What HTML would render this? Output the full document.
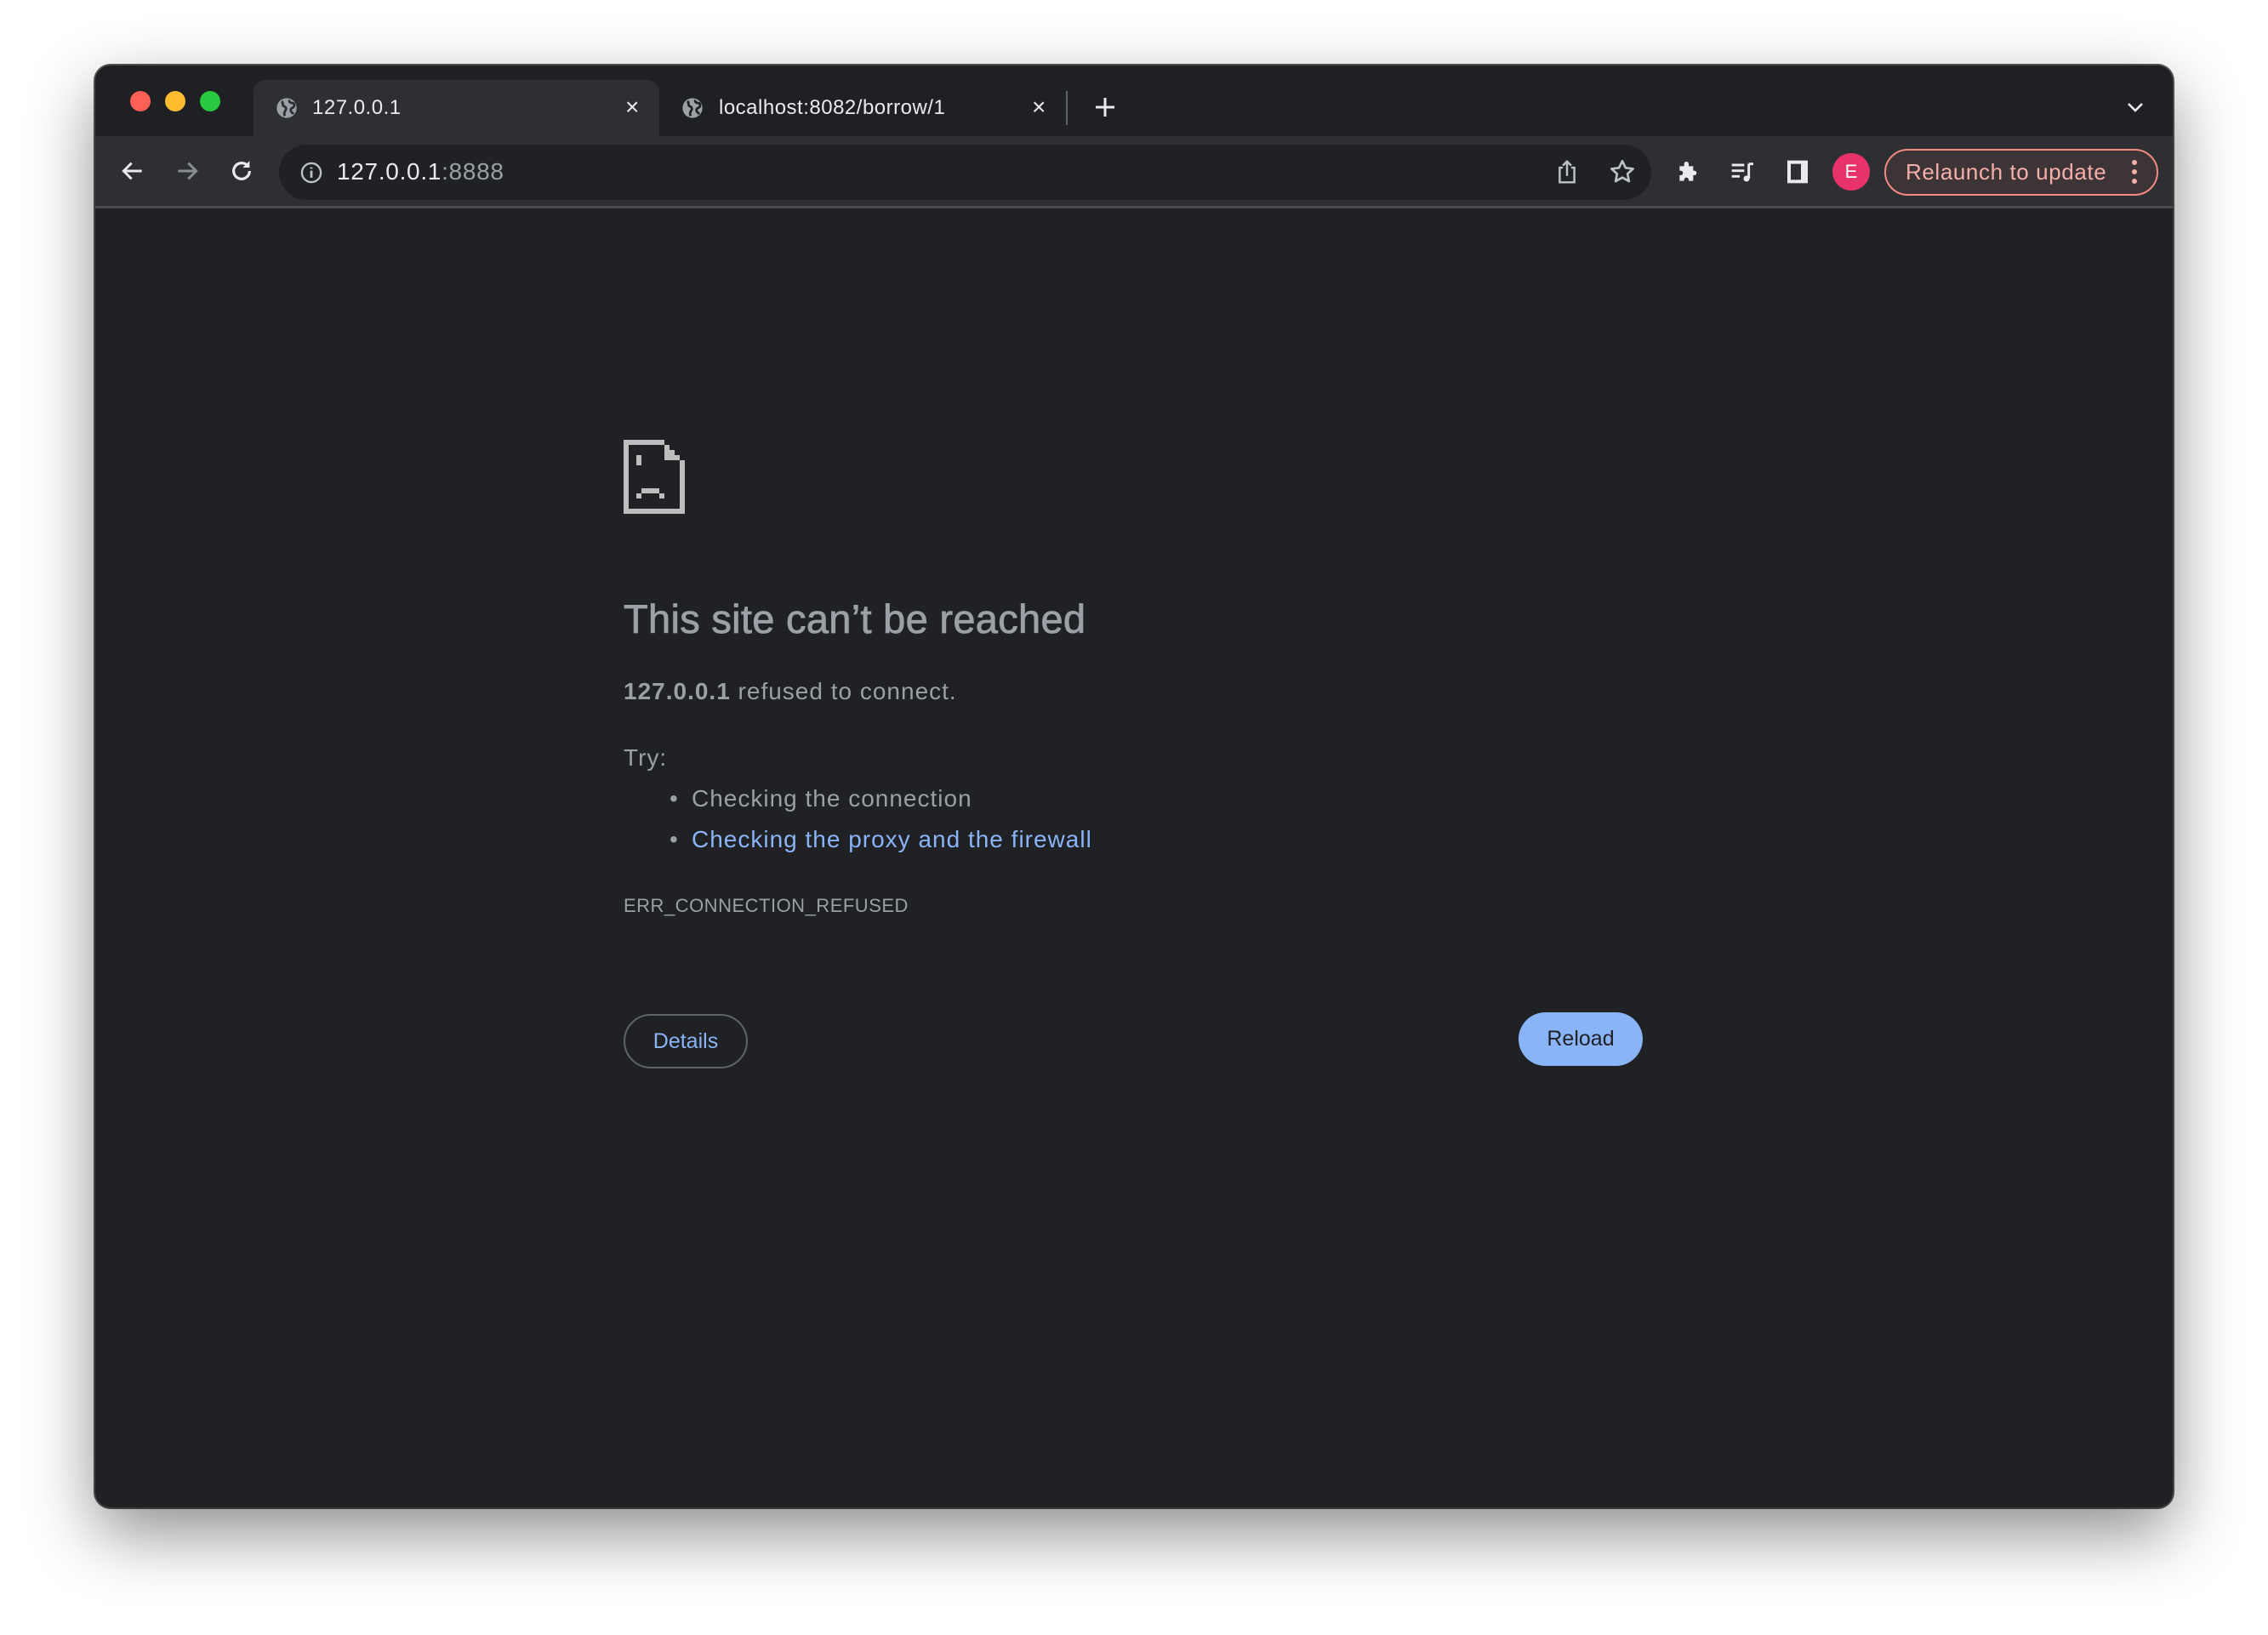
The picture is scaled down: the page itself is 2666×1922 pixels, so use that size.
<!DOCTYPE html>
<html><head><meta charset="utf-8"><style>
*{margin:0;padding:0;box-sizing:border-box}
body{width:2666px;height:1922px;background:#fff;position:relative;overflow:hidden;font-family:"Liberation Sans",Arial,sans-serif}
.win{position:absolute;left:112px;top:77px;width:2442px;height:1695px;border-radius:18px;background:#202124;overflow:hidden;box-shadow:0 30px 80px rgba(0,0,0,.45),0 0 0 2px #555}
.tl{position:absolute;top:107px;width:24px;height:24px;border-radius:50%}
.abs{position:absolute}
.t{color:#e8eaed;font-size:24px}
.p{font-size:28px;letter-spacing:1px;color:#9aa0a6}
</style></head><body>
<div class="win">
 <div class="abs" style="left:0;top:0;width:100%;height:83px;background:#1f2023"></div>
 <div class="tl" style="left:41px;top:30px;background:#ff5f57"></div>
 <div class="tl" style="left:82px;top:30px;background:#febc2e"></div>
 <div class="tl" style="left:123px;top:30px;background:#28c840"></div>
 <div class="abs" style="left:186px;top:17px;width:477px;height:70px;background:#2e2f33;border-radius:14px 14px 0 0"></div>
 <svg class="abs" style="left:211px;top:36px" width="28" height="28" viewBox="0 0 24 24"><circle cx="12" cy="12" r="10" fill="#9aa0a6"/><path d="M7 5c2 2 0 4 2 5s3 2 2 4-2 3-1 6M15 4c-1 2 1 3 3 3s2 3 1 4-3 1-3 3 2 3 3 4" stroke="#2e2f33" stroke-width="2.4" fill="none"/></svg>
 <div class="abs t" style="left:255px;top:36px;letter-spacing:.5px">127.0.0.1</div>
 <div class="abs t" style="left:623px;top:33px;font-size:28px">×</div>
 <svg class="abs" style="left:688px;top:36px" width="28" height="28" viewBox="0 0 24 24"><circle cx="12" cy="12" r="10" fill="#9aa0a6"/><path d="M7 5c2 2 0 4 2 5s3 2 2 4-2 3-1 6M15 4c-1 2 1 3 3 3s2 3 1 4-3 1-3 3 2 3 3 4" stroke="#1f2023" stroke-width="2.4" fill="none"/></svg>
 <div class="abs t" style="left:733px;top:36px;letter-spacing:.5px">localhost:8082/borrow/1</div>
 <div class="abs t" style="left:1101px;top:33px;font-size:28px">×</div>
 <div class="abs" style="left:1141px;top:30px;width:2px;height:40px;background:#5f6368"></div>
 <svg class="abs" style="left:1172px;top:34px" width="30" height="30" viewBox="0 0 30 30"><path d="M15 4v22M4 15h22" stroke="#e8eaed" stroke-width="3"/></svg>
 <svg class="abs" style="left:2387px;top:38px" width="22" height="22" viewBox="0 0 22 22"><path d="M3 7l8 8 8-8" stroke="#e8eaed" stroke-width="2.6" fill="none"/></svg>
 <div class="abs" style="left:0;top:83px;width:100%;height:85px;background:#2e2f33;border-bottom:3px solid #4a4b4f"></div>
 <svg class="abs" style="left:28px;top:108px" width="32" height="32" viewBox="0 0 24 24"><path d="M20 12H5M11 5l-7 7 7 7" stroke="#e8eaed" stroke-width="2.2" fill="none"/></svg>
 <svg class="abs" style="left:92px;top:108px" width="32" height="32" viewBox="0 0 24 24"><path d="M4 12h15M13 5l7 7-7 7" stroke="#8a8d91" stroke-width="2.2" fill="none"/></svg>
 <svg class="abs" style="left:156px;top:108px" width="32" height="32" viewBox="0 0 24 24"><path d="M19 12a7 7 0 1 1-2.1-5" stroke="#e8eaed" stroke-width="2.4" fill="none"/><path d="M19 3v6h-6z" fill="#e8eaed"/></svg>
 <div class="abs" style="left:216px;top:93px;width:1613px;height:65px;border-radius:33px;background:#202124"></div>
 <svg class="abs" style="left:240px;top:112px" width="28" height="28" viewBox="0 0 24 24"><circle cx="12" cy="12" r="9.5" stroke="#bdc1c6" stroke-width="2" fill="none"/><path d="M12 10v7M12 6.5v1.5" stroke="#bdc1c6" stroke-width="2.4"/></svg>
 <div class="abs" style="left:284px;top:109px;font-size:28px;letter-spacing:.7px;color:#e8eaed">127.0.0.1<span style="color:#9aa0a6">:8888</span></div>
 <svg class="abs" style="left:1715px;top:109px" width="30" height="32" viewBox="0 0 24 26"><path d="M8 9H5v14h14V9h-3M12 17V3M8 7l4-4 4 4" stroke="#bdc1c6" stroke-width="2" fill="none"/></svg>
 <svg class="abs" style="left:1779px;top:109px" width="32" height="32" viewBox="0 0 24 24"><path d="M12 2.5l2.9 6 6.6.8-4.9 4.5 1.3 6.5L12 17l-5.9 3.3 1.3-6.5-4.9-4.5 6.6-.8z" stroke="#bdc1c6" stroke-width="2" fill="none" stroke-linejoin="round"/></svg>
 <svg class="abs" style="left:1857px;top:109px" width="32" height="32" viewBox="0 0 24 24"><path d="M4 7h4V5a2 2 0 0 1 4 0v2h4v4h1a2 2 0 0 1 0 4h-1v5h-4v-1a2 2 0 0 0-4 0v1H4v-5h1a2 2 0 0 0 0-4H4z" fill="#e8eaed"/></svg>
 <svg class="abs" style="left:1921px;top:109px" width="32" height="32" viewBox="0 0 24 24"><path d="M2 6h11M2 11h11M2 16h7" stroke="#e8eaed" stroke-width="2.2"/><path d="M17 5v13M17 5h4" stroke="#e8eaed" stroke-width="2.2"/><circle cx="15" cy="18" r="2.6" fill="#e8eaed"/></svg>
 <svg class="abs" style="left:1986px;top:109px" width="30" height="32" viewBox="0 0 22 24"><rect x="2" y="2" width="18" height="20" fill="#e8eaed"/><rect x="5" y="5" width="9" height="14" fill="#2e2f33"/></svg>
 <div class="abs" style="left:2042px;top:103px;width:44px;height:44px;border-radius:50%;background:#e8336a;color:#fff;font-size:22px;text-align:center;line-height:44px">E</div>
 <div class="abs" style="left:2103px;top:98px;width:322px;height:55px;border-radius:28px;border:2px solid #f28b82;background:#3c3436;color:#f6aea9;font-size:26px;letter-spacing:.6px;line-height:51px;padding-left:23px">Relaunch to update</div>
 <svg class="abs" style="left:2391px;top:108px" width="12" height="34" viewBox="0 0 12 34"><circle cx="6" cy="6" r="3" fill="#f6aea9"/><circle cx="6" cy="17" r="3" fill="#f6aea9"/><circle cx="6" cy="28" r="3" fill="#f6aea9"/></svg>

 <svg class="abs" style="left:621px;top:440px" width="72" height="87" viewBox="0 0 72 87"><g fill="#bdbdbd"><rect x="0" y="0" width="6" height="87"/><rect x="0" y="81" width="72" height="6"/><rect x="66" y="24" width="6" height="63"/><rect x="0" y="0" width="48" height="6"/><rect x="48" y="6" width="6" height="6"/><rect x="54" y="12" width="6" height="6"/><rect x="60" y="18" width="6" height="6"/><rect x="48" y="6" width="6" height="18"/><rect x="48" y="18" width="18" height="6"/><rect x="15" y="18" width="6" height="12"/><rect x="15" y="63" width="6" height="6"/><rect x="21" y="57" width="21" height="6"/><rect x="42" y="63" width="6" height="6"/></g></svg>
 <div class="abs" style="left:621px;top:623px;font-size:47px;letter-spacing:.3px;color:#9aa0a6;-webkit-text-stroke:.8px #9aa0a6">This site can’t be reached</div>
 <div class="abs p" style="left:621px;top:720px"><b>127.0.0.1</b> refused to connect.</div>
 <div class="abs p" style="left:621px;top:798px">Try:</div>
 <div class="abs p" style="left:701px;top:846px"><span style="position:absolute;left:-26px">•</span>Checking the connection</div>
 <div class="abs p" style="left:701px;top:894px;color:#8ab4f8"><span style="position:absolute;left:-26px;color:#9aa0a6">•</span>Checking the proxy and the firewall</div>
 <div class="abs" style="left:621px;top:975px;font-size:22px;letter-spacing:.5px;color:#9aa0a6">ERR_CONNECTION_REFUSED</div>
 <div class="abs" style="left:621px;top:1115px;width:146px;height:64px;border:2px solid #5f6368;border-radius:32px;color:#8ab4f8;font-size:25px;text-align:center;line-height:60px">Details</div>
 <div class="abs" style="left:1673px;top:1113px;width:146px;height:63px;border-radius:32px;background:#8ab4f8;color:#202124;font-size:25px;text-align:center;line-height:63px">Reload</div>
</div>
</body></html>
